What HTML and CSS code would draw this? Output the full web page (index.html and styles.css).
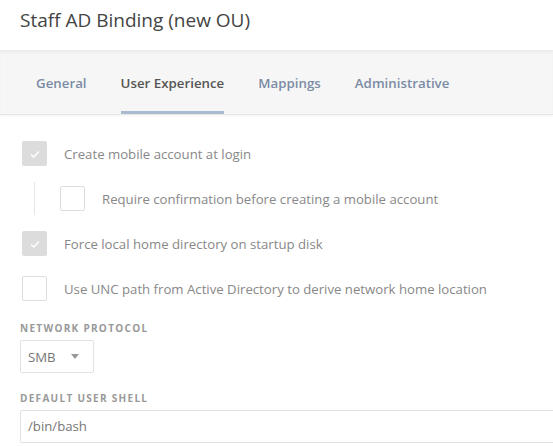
FILE: index.html
```html
<!DOCTYPE html>
<html lang="en">
<head>
  <meta charset="UTF-8">
  <meta name="viewport" content="width=device-width, initial-scale=1.0">
  <title>Staff AD Binding</title>
  <link rel="stylesheet" href="styles.css">
</head>
<body>
  <div class="header">
    <h1>Staff AD Binding (new OU)</h1>
  </div>

  <div class="tabs">
    <a class="tab">General</a>
    <a class="tab active">User Experience</a>
    <a class="tab">Mappings</a>
    <a class="tab">Administrative</a>
  </div>

  <div class="content">
    <div class="check-row">
      <span class="box checked">
        <svg width="12" height="10" viewBox="0 0 12 10"><path d="M2 5.5 L4.8 8 L10 2.5" fill="none" stroke="#fff" stroke-width="1.4"/></svg>
      </span>
      <span class="label">Create mobile account at login</span>
    </div>
    <div class="sub-group">
      <div class="check-row">
        <span class="box"></span>
        <span class="label">Require confirmation before creating a mobile account</span>
      </div>
    </div>
    <div class="check-row">
      <span class="box checked">
        <svg width="12" height="10" viewBox="0 0 12 10"><path d="M2 5.5 L4.8 8 L10 2.5" fill="none" stroke="#fff" stroke-width="1.4"/></svg>
      </span>
      <span class="label">Force local home directory on startup disk</span>
    </div>
    <div class="check-row">
      <span class="box"></span>
      <span class="label">Use UNC path from Active Directory to derive network home location</span>
    </div>

    <div class="field">
      <div class="field-label">Network Protocol</div>
      <div class="select">SMB <span class="caret"></span></div>
    </div>

    <div class="field">
      <div class="field-label">Default User Shell</div>
      <div class="text-input">/bin/bash</div>
    </div>
  </div>
</body>
</html>
```

FILE: styles.css
```css
body {
  margin: 0;
  font-family: "Open Sans", Lato, sans-serif;
  background-color: #fff;
  color: #444;
}

.header {
  padding: 7px 20px 0;
  height: 43px;
}

h1 {
  margin: 0;
  font-size: 19px;
  font-weight: normal;
  color: #444;
}

/* tab bar */
.tabs {
  display: flex;
  gap: 34px;
  padding: 0 36px;
  height: 63px;
  background-color: #f6f6f6;
  border-top: 1px solid #ececec;
  border-bottom: 1px solid #e6e6e6;
  box-shadow: inset 0 2px 2px rgba(0, 0, 0, 0.03), 0 1px 2px rgba(0, 0, 0, 0.05);
}

.tab {
  display: flex;
  align-items: center;
  padding-top: 4px;
  font-size: 13.3px;
  font-weight: 600;
  color: #7b8ba4;
  border-bottom: 3px solid transparent;
  box-sizing: border-box;
}

.tab.active {
  color: #555;
  border-bottom-color: #a8bbd0;
}

.content {
  padding: 26px 20px 0;
}

.check-row {
  display: flex;
  align-items: center;
  gap: 17px;
  height: 25px;
  padding-left: 2px;
  margin-bottom: 20px;
}

.box {
  width: 23px;
  height: 23px;
  border: 1px solid #ddd;
  border-radius: 2px;
  display: flex;
  align-items: center;
  justify-content: center;
  flex-shrink: 0;
}

.box.checked {
  background-color: #dcdcdc;
  border-color: #dcdcdc;
}

.label {
  font-size: 13.2px;
  color: #888;
}

.sub-group {
  margin: -4px 0 16px 14px;
  padding: 4px 0 4px 25px;
  border-left: 1px solid #e8e8e8;
}

.sub-group .check-row {
  padding-left: 0;
  margin-bottom: 0;
}

.field {
  margin-bottom: 18px;
}

.field-label {
  font-size: 10px;
  font-weight: bold;
  text-transform: uppercase;
  letter-spacing: 1.3px;
  color: #999;
  margin-bottom: 5px;
  line-height: 14px;
}

.select {
  display: inline-flex;
  align-items: center;
  gap: 15px;
  height: 31px;
  padding: 0 14px 0 7px;
  border: 1px solid #e2e2e2;
  border-radius: 2px;
  font-size: 13.2px;
  color: #777;
}

.caret {
  width: 0;
  height: 0;
  border-left: 4px solid transparent;
  border-right: 4px solid transparent;
  border-top: 5px solid #999;
}

.text-input {
  height: 31px;
  line-height: 31px;
  padding: 0 7px;
  margin-right: -20px;
  border: 1px solid #e2e2e2;
  border-right: none;
  border-radius: 2px 0 0 2px;
  font-size: 13.2px;
  color: #777;
}
```
